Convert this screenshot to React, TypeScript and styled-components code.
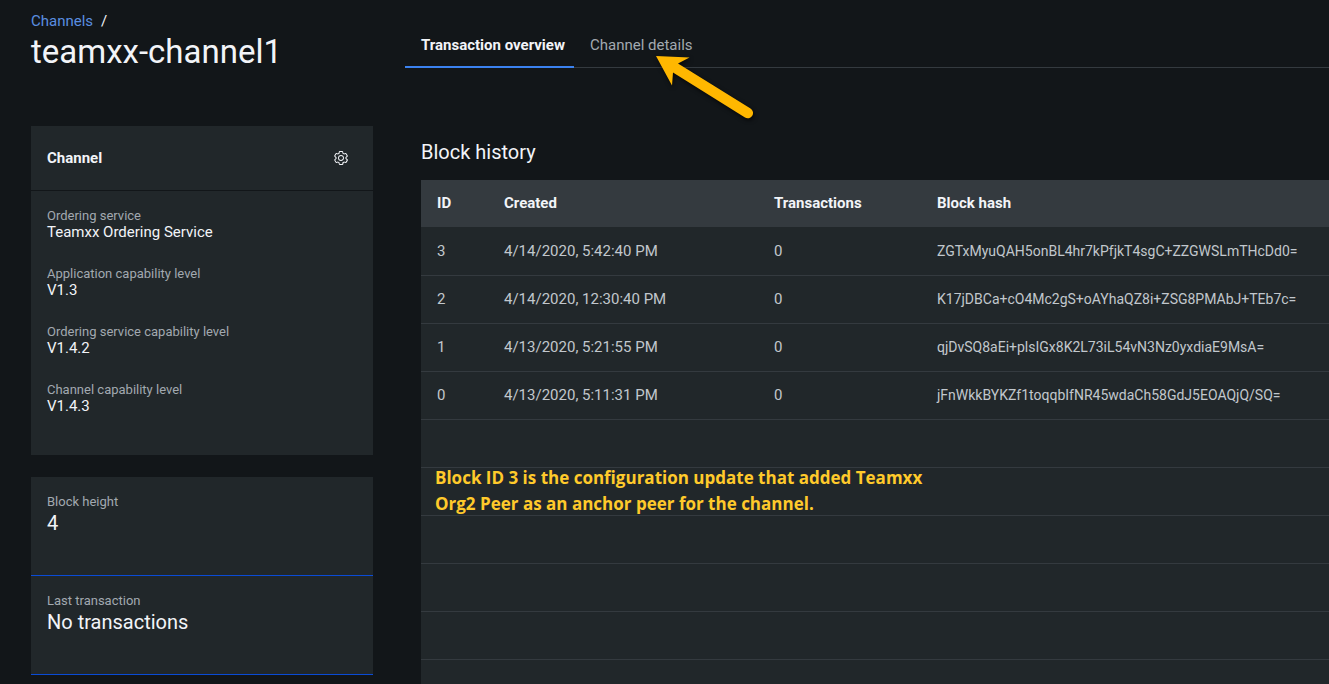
import React from "react";
import styled, { createGlobalStyle } from "styled-components";

const color = {
  page: "#121619",
  panel: "#21272a",
  raised: "#343a3f",
  text: "#f2f4f8",
  muted: "#c1c7cd",
  label: "#a2a9b0",
  link: "#5a8ee0",
  accent: "#3b82f0",
  meter: "#0a4bd6",
  note: "#ffca2b",
  arrow: "#ffb700",
};

const GlobalStyle = createGlobalStyle`
  *, *::before, *::after { box-sizing: border-box; }
  body {
    margin: 0;
    background: ${color.page};
    color: ${color.text};
    font-family: Roboto, "Liberation Sans", sans-serif;
    font-size: 15px;
    line-height: 18px;
  }
  h1, h2, h3, p, dl, dd { margin: 0; }
`;

const Page = styled.div`
  display: grid;
  grid-template-columns: 342px minmax(0, 1fr);
  column-gap: 32px;
  height: 100vh;
  padding-left: 31px;
  overflow: hidden;
`;

const Sidebar = styled.aside`
  padding-top: 12px;
`;

const Breadcrumb = styled.nav`
  display: flex;
  gap: 8px;
`;

const CrumbLink = styled.a`
  color: ${color.link};
  text-decoration: none;
`;

const Title = styled.h1`
  font-size: 33px;
  font-weight: 400;
  line-height: 44px;
  margin-bottom: 52px;
`;

const Card = styled.section`
  background: ${color.panel};
  margin-bottom: 22px;
`;

const CardHeader = styled.header`
  display: flex;
  align-items: center;
  justify-content: space-between;
  height: 65px;
  padding: 0 16px;
  border-bottom: 1px solid ${color.page};
`;

const CardTitle = styled.h2`
  font-size: 15px;
  font-weight: 700;
`;

const IconButton = styled.button`
  display: flex;
  align-items: center;
  justify-content: center;
  width: 32px;
  height: 32px;
  padding: 0;
  border: 0;
  background: none;
  color: ${color.text};
  cursor: pointer;
`;

const Facts = styled.dl`
  display: grid;
  gap: 24px;
  padding: 16px 16px 40px;
`;

const Label = styled.dt`
  color: ${color.label};
  font-size: 13px;
  line-height: 17px;
`;

const Value = styled.dd<{ $large?: boolean }>`
  font-size: ${(p) => (p.$large ? 20 : 15)}px;
  line-height: ${(p) => (p.$large ? 26 : 17)}px;
`;

const Meter = styled.dl`
  height: 99px;
  padding: 16px;
  border-bottom: 1px solid ${color.meter};
`;

const Main = styled.main`
  position: relative;
  min-width: 0;
`;

const TabBar = styled.div`
  display: flex;
  align-items: flex-end;
  height: 68px;
  border-bottom: 1px solid ${color.raised};
`;

const Tab = styled.button<{ $active?: boolean }>`
  height: 46px;
  margin-bottom: -1px;
  padding: 2px 9px 0 16px;
  border: 0;
  border-bottom: 2px solid ${(p) => (p.$active ? color.accent : "transparent")};
  background: none;
  color: ${(p) => (p.$active ? color.text : color.label)};
  font: inherit;
  font-weight: ${(p) => (p.$active ? 700 : 400)};
  cursor: pointer;
`;

const History = styled.section`
  position: relative;
  padding: 71px 0 0 16px;
`;

const SectionTitle = styled.h2`
  font-size: 20px;
  font-weight: 400;
  line-height: 26px;
  margin-bottom: 15px;
`;

const Table = styled.table`
  width: 100%;
  table-layout: fixed;
  border-collapse: separate;
  border-spacing: 0;
  text-align: left;
`;

const Column = styled.col<{ $width?: string }>`
  width: ${(p) => p.$width ?? "auto"};
`;

const HeadCell = styled.th`
  height: 48px;
  padding: 0 16px 2px;
  border-bottom: 1px solid ${color.panel};
  background: ${color.raised};
  font-weight: 700;
`;

const Cell = styled.td<{ $small?: boolean }>`
  height: 48px;
  padding: 0 0 2px 16px;
  border-bottom: 1px solid ${color.raised};
  background: ${color.panel};
  color: ${color.muted};
  font-size: ${(p) => (p.$small ? 14 : 15)}px;
  white-space: nowrap;
`;

const Note = styled.p`
  position: absolute;
  top: 397px;
  left: 30px;
  width: 500px;
  color: ${color.note};
  font-family: "Open Sans", "Noto Sans", sans-serif;
  font-size: 17px;
  font-weight: 700;
  line-height: 26px;
`;

const Pointer = styled.svg`
  position: absolute;
  top: 50px;
  left: 245px;
  pointer-events: none;
  filter: drop-shadow(1px 2px 2px rgba(0, 0, 0, 0.7));
`;

const SettingsIcon = () => (
  <svg width="16" height="16" viewBox="0 0 16 16" fill="currentColor" aria-hidden="true">
    <path d="M13.5,8.4c0-0.1,0-0.3,0-0.4c0-0.1,0-0.3,0-0.4l1-0.8c0.4-0.3,0.4-0.9,0.2-1.3l-1.2-2C13.3,3.2,13,3,12.6,3c-0.1,0-0.2,0-0.3,0.1l-1.2,0.4c-0.2-0.1-0.4-0.3-0.7-0.4l-0.3-1.3C10.1,1.3,9.7,1,9.2,1H6.8c-0.5,0-0.9,0.3-1,0.8L5.6,3.1C5.3,3.2,5.1,3.3,4.9,3.4L3.7,3C3.6,3,3.5,3,3.4,3C3,3,2.7,3.2,2.5,3.5l-1.2,2C1.1,5.9,1.2,6.4,1.6,6.8l0.9,0.9c0,0.1,0,0.3,0,0.4c0,0.1,0,0.3,0,0.4L1.6,9.2c-0.4,0.3-0.5,0.9-0.2,1.3l1.2,2C2.7,12.8,3,13,3.4,13c0.1,0,0.2,0,0.3-0.1l1.2-0.4c0.2,0.1,0.4,0.3,0.7,0.4l0.3,1.3c0.1,0.5,0.5,0.8,1,0.8h2.4c0.5,0,0.9-0.3,1-0.8l0.3-1.3c0.2-0.1,0.4-0.2,0.7-0.4l1.2,0.4c0.1,0,0.2,0.1,0.3,0.1c0.4,0,0.7-0.2,0.9-0.5l1.1-2c0.2-0.4,0.2-0.9-0.2-1.3L13.5,8.4z M12.6,12l-1.7-0.6c-0.4,0.3-0.9,0.6-1.4,0.8L9.2,14H6.8l-0.4-1.8c-0.5-0.2-0.9-0.5-1.4-0.8L3.4,12l-1.2-2l1.4-1.2c-0.1-0.5-0.1-1.1,0-1.6L2.2,6l1.2-2l1.7,0.6C5.5,4.2,6,4,6.5,3.8L6.8,2h2.4l0.4,1.8c0.5,0.2,0.9,0.5,1.4,0.8L12.6,4l1.2,2l-1.4,1.2c0.1,0.5,0.1,1.1,0,1.6l1.4,1.2L12.6,12z M8,11c-1.7,0-3-1.3-3-3s1.3-3,3-3s3,1.3,3,3C11,9.6,9.7,11,8,11z M8,6C6.9,6,6,6.8,6,7.9V8c0,1.1,0.8,2,1.9,2H8c1.1,0,2-0.8,2-1.9V8C10,6.9,9.2,6,8,6z" />
  </svg>
);

const facts = [
  { label: "Ordering service", value: "Teamxx Ordering Service" },
  { label: "Application capability level", value: "V1.3" },
  { label: "Ordering service capability level", value: "V1.4.2" },
  { label: "Channel capability level", value: "V1.4.3" },
];

const meters = [
  { label: "Block height", value: "4" },
  { label: "Last transaction", value: "No transactions" },
];

const blocks = [
  { id: 3, created: "4/14/2020, 5:42:40 PM", count: 0, hash: "ZGTxMyuQAH5onBL4hr7kPfjkT4sgC+ZZGWSLmTHcDd0=" },
  { id: 2, created: "4/14/2020, 12:30:40 PM", count: 0, hash: "K17jDBCa+cO4Mc2gS+oAYhaQZ8i+ZSG8PMAbJ+TEb7c=" },
  { id: 1, created: "4/13/2020, 5:21:55 PM", count: 0, hash: "qjDvSQ8aEi+plsIGx8K2L73iL54vN3Nz0yxdiaE9MsA=" },
  { id: 0, created: "4/13/2020, 5:11:31 PM", count: 0, hash: "jFnWkkBYKZf1toqqbIfNR45wdaCh58GdJ5EOAQjQ/SQ=" },
];

const PAGE_SIZE = 10;
const emptyRows = Array.from({ length: PAGE_SIZE - blocks.length }, (_, i) => i);

export default function App() {
  return (
    <>
      <GlobalStyle />
      <Page>
        <Sidebar>
          <Breadcrumb aria-label="Breadcrumb">
            <CrumbLink href="#channels">Channels</CrumbLink>
            <span>/</span>
          </Breadcrumb>
          <Title>teamxx-channel1</Title>
          <Card>
            <CardHeader>
              <CardTitle>Channel</CardTitle>
              <IconButton type="button" aria-label="Channel settings">
                <SettingsIcon />
              </IconButton>
            </CardHeader>
            <Facts>
              {facts.map((f) => (
                <div key={f.label}>
                  <Label>{f.label}</Label>
                  <Value>{f.value}</Value>
                </div>
              ))}
            </Facts>
          </Card>
          <Card>
            {meters.map((m) => (
              <Meter key={m.label}>
                <Label>{m.label}</Label>
                <Value $large>{m.value}</Value>
              </Meter>
            ))}
          </Card>
        </Sidebar>
        <Main>
          <TabBar role="tablist">
            <Tab type="button" role="tab" aria-selected="true" $active>
              Transaction overview
            </Tab>
            <Tab type="button" role="tab" aria-selected="false">
              Channel details
            </Tab>
          </TabBar>
          <Pointer width="112" height="76" viewBox="0 0 112 76" aria-hidden="true">
            <path
              d="M6 6 39.5 7.5 28 13.5 100.500 58.500A5.200 5.200 0 0 1 95 67.500L23 22.500 22 35.500Z"
              fill={color.arrow}
            />
          </Pointer>
          <History>
            <SectionTitle>Block history</SectionTitle>
            <Table>
              <colgroup>
                <Column $width="67px" />
                <Column $width="270px" />
                <Column $width="163px" />
                <Column />
              </colgroup>
              <thead>
                <tr>
                  <HeadCell scope="col">ID</HeadCell>
                  <HeadCell scope="col">Created</HeadCell>
                  <HeadCell scope="col">Transactions</HeadCell>
                  <HeadCell scope="col">Block hash</HeadCell>
                </tr>
              </thead>
              <tbody>
                {blocks.map((b) => (
                  <tr key={b.id}>
                    <Cell>{b.id}</Cell>
                    <Cell>{b.created}</Cell>
                    <Cell>{b.count}</Cell>
                    <Cell $small>{b.hash}</Cell>
                  </tr>
                ))}
                {emptyRows.map((i) => (
                  <tr key={i}>
                    <Cell colSpan={4} />
                  </tr>
                ))}
              </tbody>
            </Table>
            <Note>
              Block ID 3 is the configuration update that added Teamxx Org2 Peer as an anchor peer for the channel.
            </Note>
          </History>
        </Main>
      </Page>
    </>
  );
}
